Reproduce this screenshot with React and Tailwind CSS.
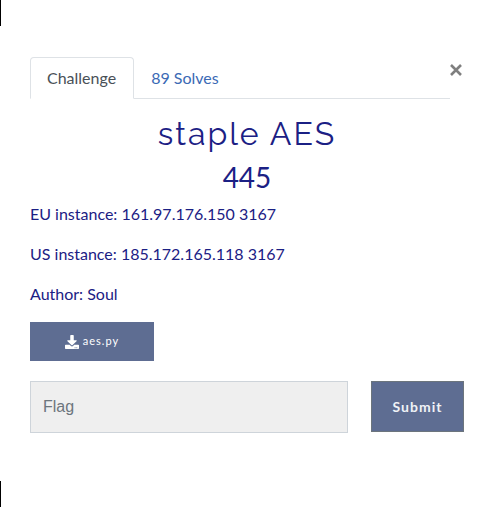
import React from "react";
import { FaDownload } from "react-icons/fa";

function Backdrop() {
  return (
    <div aria-hidden="true" className="flex w-px shrink-0 flex-col justify-between">
      <div className="h-[26px] bg-black" />
      <div className="h-[26px] bg-black" />
    </div>
  );
}

function Tabs() {
  return (
    <div className="flex items-start">
      <nav className="flex h-[42px] grow border-b border-[#dee2e6]">
        <a
          href="#challenge"
          className="-mb-px rounded-t border border-[#dee2e6] border-b-white bg-white py-2 pr-[17px] pl-4 text-[#495057]"
        >
          Challenge
        </a>
        <a href="#solves" className="border border-transparent px-4 py-2 text-[#3b6ab5]">
          89 Solves
        </a>
      </nav>
      <button type="button" aria-label="Close" className="flex h-[26px] w-[14px] items-center">
        <svg viewBox="0 0 12 12" className="h-3 w-3" fill="none" stroke="#7f7f7f" strokeWidth="2.6">
          <path d="M1 1 11 11M11 1 1 11" />
        </svg>
      </button>
    </div>
  );
}

export default function App() {
  return (
    <div className="flex min-h-screen bg-white font-['Lato',sans-serif] text-base text-[#1b2084]">
      <Backdrop />
      <main className="grow pt-[57px] pr-[30px] pl-[29px]">
        <Tabs />
        <h2 className="mt-4 text-center font-['Raleway','Lato',sans-serif] text-[32px] leading-[38px] font-normal tracking-[2px]">
          staple AES
        </h2>
        <h3 className="mt-1.5 text-center text-[28px] leading-9">445</h3>
        <div className="mt-[7px] flex flex-col gap-4 leading-6">
          <p>EU instance: 161.97.176.150 3167</p>
          <p>US instance: 185.172.165.118 3167</p>
          <p>Author: Soul</p>
        </div>
        <a
          href="#aes.py"
          className="mt-4 flex h-[39px] w-[124px] items-center justify-center gap-1 bg-[#5e6d92] text-[11px] tracking-[1px] text-white"
        >
          <FaDownload className="size-[14px]" />
          aes.py
        </a>
        <form className="mt-5 flex gap-[23px]" onSubmit={(e) => e.preventDefault()}>
          <input
            type="text"
            aria-label="Flag"
            placeholder="Flag"
            className="h-[52px] min-w-0 grow border border-[#ced4da] bg-[#efefef] px-3 font-['Liberation_Sans',Arial,sans-serif] text-base text-[#495057] placeholder:text-[#6c757d]"
          />
          <button
            type="submit"
            className="h-[51px] w-[93px] border border-[#6c757d] bg-[#5e6d92] text-sm font-bold tracking-[1px] text-[#f0f2f6]"
          >
            Submit
          </button>
        </form>
      </main>
    </div>
  );
}
